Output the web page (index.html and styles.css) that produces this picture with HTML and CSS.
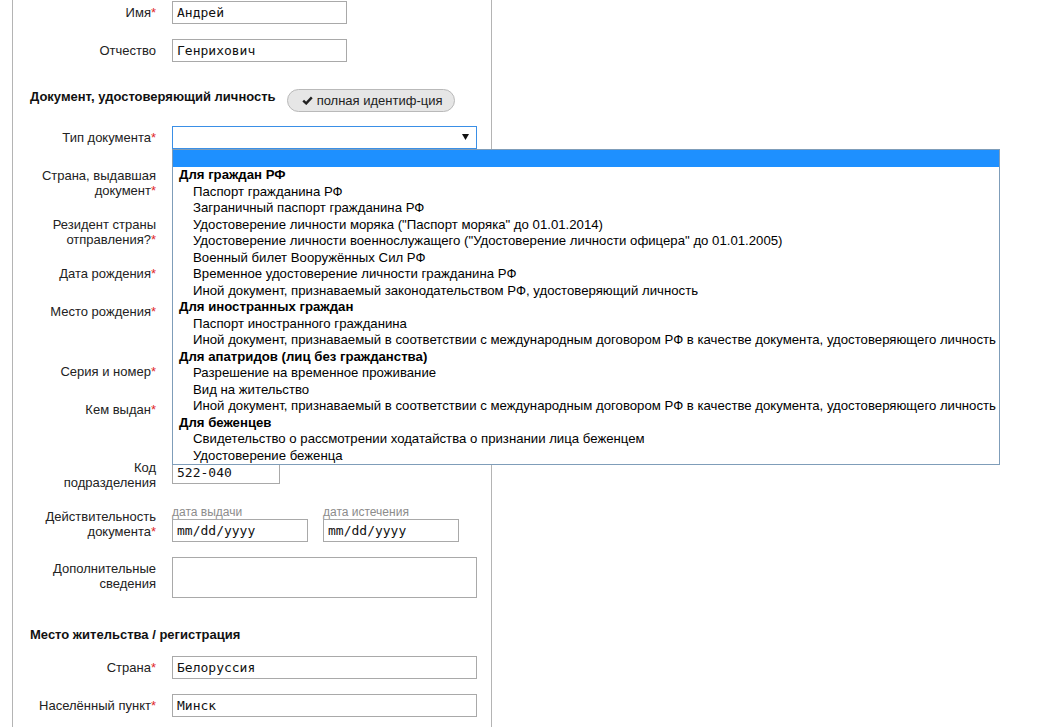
FILE: index.html
```html
<!DOCTYPE html>
<html lang="ru">
<head>
<meta charset="utf-8">
<title>Документ</title>
<link rel="stylesheet" href="styles.css">
</head>
<body>
<div class="page">
  <div class="panel">
    <div class="row first">
      <div class="lbl">Имя<span class="req">*</span></div>
      <div class="field w-name">Андрей</div>
    </div>
    <div class="row">
      <div class="lbl">Отчество</div>
      <div class="field w-name">Генрихович</div>
    </div>

    <div class="section-head">
      <div class="heading">Документ, удостоверяющий личность</div>
      <div class="pill">
        <svg class="check" width="11" height="9" viewBox="0 0 11 9"><path d="M1.2 4.6 L4.2 7.4 L9.8 1.4" fill="none" stroke="#222" stroke-width="2.4"/></svg>
        <span>полная идентиф-ция</span>
      </div>
    </div>

    <div class="row row-select">
      <div class="lbl">Тип документа<span class="req">*</span></div>
      <div class="field w-full select">
        <svg class="arrow" width="7" height="6" viewBox="0 0 7 6"><polygon points="0,0 7,0 3.5,6" fill="#111"/></svg>
        <div class="dropdown">
          <div class="opt-blank"></div>
          <div class="grp">Для граждан РФ</div>
          <div class="opt">Паспорт гражданина РФ</div>
          <div class="opt">Заграничный паспорт гражданина РФ</div>
          <div class="opt">Удостоверение личности моряка ("Паспорт моряка" до 01.01.2014)</div>
          <div class="opt">Удостоверение личности военнослужащего ("Удостоверение личности офицера" до 01.01.2005)</div>
          <div class="opt">Военный билет Вооружённых Сил РФ</div>
          <div class="opt">Временное удостоверение личности гражданина РФ</div>
          <div class="opt">Иной документ, признаваемый законодательством РФ, удостоверяющий личность</div>
          <div class="grp">Для иностранных граждан</div>
          <div class="opt">Паспорт иностранного гражданина</div>
          <div class="opt">Иной документ, признаваемый в соответствии с международным договором РФ в качестве документа, удостоверяющего личность</div>
          <div class="grp">Для апатридов (лиц без гражданства)</div>
          <div class="opt">Разрешение на временное проживание</div>
          <div class="opt">Вид на жительство</div>
          <div class="opt">Иной документ, признаваемый в соответствии с международным договором РФ в качестве документа, удостоверяющего личность</div>
          <div class="grp">Для беженцев</div>
          <div class="opt">Свидетельство о рассмотрении ходатайства о признании лица беженцем</div>
          <div class="opt">Удостоверение беженца</div>
        </div>
      </div>
    </div>

    <div class="row">
      <div class="lbl">Страна, выдавшая<br>документ<span class="req">*</span></div>
      <div class="field w-full tall34"></div>
    </div>
    <div class="row">
      <div class="lbl">Резидент страны<br>отправления?<span class="req">*</span></div>
      <div class="field w-name"></div>
    </div>
    <div class="row">
      <div class="lbl">Дата рождения<span class="req">*</span></div>
      <div class="field w-date"></div>
    </div>
    <div class="row">
      <div class="lbl">Место рождения<span class="req">*</span></div>
      <div class="field w-full tall45"></div>
    </div>
    <div class="row">
      <div class="lbl">Серия и номер<span class="req">*</span></div>
      <div class="field w-name"></div>
    </div>
    <div class="row">
      <div class="lbl">Кем выдан<span class="req">*</span></div>
      <div class="field w-full tall43"></div>
    </div>
    <div class="row">
      <div class="lbl">Код<br>подразделения</div>
      <div class="field w-code code-field">522-040</div>
    </div>
    <div class="row">
      <div class="lbl">Действительность<br>документа<span class="req">*</span></div>
      <div class="dates">
        <div class="date-col">
          <div class="caption">дата выдачи</div>
          <div class="field w-date">mm/dd/yyyy</div>
        </div>
        <div class="date-col">
          <div class="caption">дата истечения</div>
          <div class="field w-date">mm/dd/yyyy</div>
        </div>
      </div>
    </div>
    <div class="row">
      <div class="lbl">Дополнительные<br>сведения</div>
      <div class="field w-full textarea"></div>
    </div>

    <div class="section-head second">
      <div class="heading">Место жительства / регистрация</div>
    </div>

    <div class="row after-head">
      <div class="lbl">Страна<span class="req">*</span></div>
      <div class="field w-full">Белоруссия</div>
    </div>
    <div class="row">
      <div class="lbl">Населённый пункт<span class="req">*</span></div>
      <div class="field w-full">Минск</div>
    </div>
  </div>
</div>
</body>
</html>
```

FILE: styles.css
```css
* {
  box-sizing: border-box;
}

html,
body {
  margin: 0;
  padding: 0;
  background: #fff;
}

body {
  font-family: "Liberation Sans", Arial, sans-serif;
  font-size: 13px;
  color: #222;
  overflow: hidden;
}

.page {
  padding-left: 12px;
}

.panel {
  width: 480px;
  min-height: 760px;
  border-left: 1px solid #b4b4b4;
  border-right: 1px solid #b4b4b4;
  padding: 1px 13px 20px 17px;
}

.row {
  display: grid;
  grid-template-columns: 126px 1fr;
  column-gap: 16px;
  align-items: start;
  justify-items: start;
  margin-top: 15px;
}

.row.first {
  margin-top: 0;
}

.row.row-select {
  margin-top: 14px;
}

.row.after-head {
  margin-top: 14px;
}

.lbl {
  justify-self: end;
  text-align: right;
  line-height: 15px;
  padding-top: 4px;
  color: #222;
  white-space: nowrap;
}

.req {
  color: #e0282a;
}

.field {
  height: 23px;
  border: 1px solid #a9a9a9;
  background: #fff;
  padding: 0 4px;
  font-family: "DejaVu Sans Mono", "Liberation Mono", monospace;
  font-size: 13px;
  line-height: 21px;
  color: #111;
  white-space: nowrap;
}

.w-name {
  width: 175px;
}

.w-full {
  width: 305px;
}

.w-date {
  width: 136px;
}

.w-code {
  width: 108px;
}

.code-field {
  margin-top: 5px;
}

.tall34 {
  height: 34px;
}

.tall45 {
  height: 45px;
}

.tall43 {
  height: 43px;
}

.textarea {
  height: 41px;
}

.section-head {
  display: flex;
  align-items: flex-start;
  gap: 11px;
  margin-top: 27px;
}

.section-head.second {
  margin-top: 29px;
}

.heading {
  font-weight: bold;
  font-size: 13px;
  line-height: 15px;
  color: #111;
}

.pill {
  display: flex;
  align-items: center;
  gap: 4px;
  height: 23px;
  padding: 0 11px 0 14px;
  border: 1px solid #b9b9b9;
  border-radius: 12px;
  background: #e6e6e6;
  line-height: 21px;
  color: #222;
}

.check {
  display: block;
}

.select {
  position: relative;
  border-color: #3a8fe6;
}

.arrow {
  position: absolute;
  right: 7px;
  top: 7px;
}

.dropdown {
  position: absolute;
  left: -1px;
  top: calc(100% + 1px);
  width: 828px;
  z-index: 10;
  background: #fff;
  border: 1px solid #7f9db9;
  font-family: "Liberation Sans", Arial, sans-serif;
  font-size: 13.2px;
  color: #000;
}

.opt-blank {
  height: 17px;
  background: #1e90ff;
}

.grp,
.opt {
  height: 16.5px;
  line-height: 16.5px;
  white-space: nowrap;
}

.grp {
  font-weight: bold;
  padding-left: 6px;
}

.opt {
  padding-left: 20px;
}

.dates {
  display: flex;
  gap: 15px;
}

.date-col {
  display: flex;
  flex-direction: column;
}

.caption {
  font-size: 12px;
  line-height: 14px;
  color: #8c8c8c;
}
```
